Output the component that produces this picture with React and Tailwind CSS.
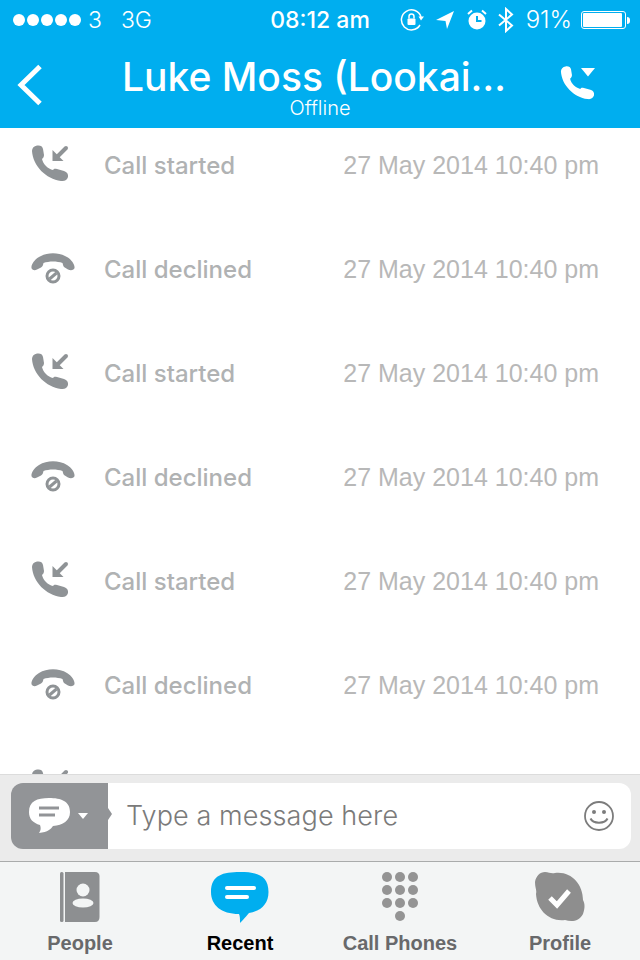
import React from "react";

const SANS = "font-['Liberation_Sans',Arial,sans-serif]";
const MEDIUM = "font-['Inter','Liberation_Sans',sans-serif] font-medium";
const LIGHT = "font-['Inter','Liberation_Sans',sans-serif] font-light";

const HANDSET = "M7 1.500C10 1 12.500 2 13 5L14 11C14 13 13 14 12 15C13 20 18 25 23 26C24 24.500 25 24.500 27 25L34 27C37 28 38.500 30 38 33C37 36 35 37.500 31 37C16 35 3 22 2 7C2 4 4 2 7 1.500Z";

const StartedIcon = () => (
    <svg width="40" height="40" viewBox="0 0 40 40" className="block">
        <path d={HANDSET} fill="#8f9396" />
        <path d="M36 4L25 15" stroke="#8f9396" strokeWidth="4" strokeLinecap="round" fill="none" />
        <path d="M22.500 6V17H33.500Z" fill="#8f9396" />
    </svg>
);

const DeclinedIcon = () => (
    <svg width="46" height="34" viewBox="0 0 46 34" className="block">
        <path d="M1.500 17C1 14 4 9 9 6C17 1 29 1 37 6C42 9 45 14 44.500 17C44 19 41 20 38 18.500L34 16C33 15 33 13 32.500 12C27 10 19 10 13.500 12C13 14 13 15 11 16.500L7 18.500C4.500 20 2 19 1.500 17Z" fill="#8f9396" />
        <circle cx="23" cy="25" r="6" fill="none" stroke="#8f9396" strokeWidth="3" />
        <path d="M19.500 28L26.500 22" stroke="#8f9396" strokeWidth="3" />
    </svg>
);

const CallRow = ({ type }) => (
    <div className="flex h-[104px] shrink-0 items-center pl-[30px] pr-[41px]">
        <div className="flex w-[74px] -translate-y-[2px]">
            {type === "started" ? <StartedIcon /> : <DeclinedIcon />}
        </div>
        <span className={`${MEDIUM} flex-1 text-[24px] text-[#b0b2b3]`}>
            {type === "started" ? "Call started" : "Call declined"}
        </span>
        <span className={`${SANS} text-[25px] text-[#b8b8b8]`}>27 May 2014 10:40 pm</span>
    </div>
);

const StatusBar = () => (
    <div className="flex h-10 items-center px-[10px] text-[23px] text-white">
        <div className="flex flex-1 items-center">
            <div className="ml-[3px] flex gap-[2px]">
                {[0, 1, 2, 3, 4].map((i) => (
                    <span key={i} className="h-3 w-3 rounded-full bg-white" />
                ))}
            </div>
            <span className={`${LIGHT} ml-[7px]`}>3</span>
            <span className={`${LIGHT} ml-[19px]`}>3G</span>
        </div>
        <span className={`${MEDIUM} text-[23px]`}>08:12 am</span>
        <div className="flex flex-1 items-center justify-end">
            <svg width="24" height="24" viewBox="0 0 24 24" fill="none" stroke="white" strokeWidth="1.500">
                <path d="M20 17A10 10 0 1 1 21 9" />
                <path d="M18.500 8.500L24 8.500L21 12.500Z" fill="white" stroke="none" />
                <rect x="7.500" y="10.500" width="8" height="6.500" rx="1" fill="white" stroke="none" />
                <path d="M9 10.500V8.500A2.500 2.500 0 0 1 14 8.500V10.500" />
            </svg>
            <svg className="ml-[12px]" width="20" height="20" viewBox="0 0 20 20" fill="white">
                <path d="M0 10L18 1L11 19L9.500 11Z" />
            </svg>
            <svg className="ml-[11px]" width="20" height="22" viewBox="0 0 20 22">
                <circle cx="10" cy="12" r="8.500" fill="white" />
                <path d="M10 7V12H14.500" stroke="#00aeef" strokeWidth="2" fill="none" />
                <path d="M1 5L5 1.500M19 5L15 1.500" stroke="white" strokeWidth="2" />
            </svg>
            <svg className="ml-[11px]" width="16" height="26" viewBox="0 0 16 26" fill="none" stroke="white" strokeWidth="2">
                <path d="M1 7.500L14 18.500L8 24V2L14 7.500L1 18.500" />
            </svg>
            <span className={`${LIGHT} ml-[12px] text-[24px]`}>91%</span>
            <div className="ml-[9px] flex items-center">
                <div className="h-[18px] w-[45px] rounded-[3px] border border-white p-[1px]">
                    <div className="h-full w-[39px] rounded-[1px] bg-white" />
                </div>
                <div className="ml-[1px] h-[7px] w-[3px] rounded-r-sm bg-white" />
            </div>
        </div>
    </div>
);

const Header = () => (
    <div className="bg-[#00aeef]">
        <StatusBar />
        <div className="relative flex h-[88px] items-start pl-[17px] pr-[44px] text-white">
            <svg className="mt-[24px]" width="26" height="42" viewBox="0 0 26 42" fill="none" stroke="white" strokeWidth="5">
                <path d="M23 2.500L4 21L23 39.500" />
            </svg>
            <div className="flex-1 whitespace-nowrap pl-[79px]">
                <div className={`${MEDIUM} mt-[15px] text-[39px] leading-[44px]`}>Luke Moss (Lookai…</div>
            </div>
            <svg className="mt-[25px]" width="36" height="36" viewBox="0 0 36 36">
                <path transform="scale(0.92) translate(-1 0)" d={HANDSET} fill="white" />
                <path d="M21 3H35L28 11.500Z" fill="white" />
            </svg>
            <div className={`${LIGHT} absolute bottom-[9px] left-0 w-full text-center text-[20px] leading-[22px]`}>Offline</div>
        </div>
    </div>
);

const InputBar = () => (
    <div className="h-[88px] shrink-0 border-y border-t-[#dcdcdc] border-b-[#a9abab] bg-[#ebebeb] pl-[11px] pr-[9px] pt-[8px]">
        <div className="flex h-[66px] w-full items-stretch">
            <div className="relative flex w-[97px] shrink-0 items-center rounded-l-[12px] bg-[#929497] pl-[18px]">
                <svg width="44" height="38" viewBox="0 0 44 38">
                    <path d="M20 1C32 1 41 4 41 15C41 24 34 28 24 29C22 32 19 35 10 36C12 33 12 31 11 28C4 26 0 22 0 15C0 4 8 1 20 1Z" fill="white" />
                    <path d="M10 11H30" stroke="#929497" strokeWidth="3" />
                    <path d="M10 18H26" stroke="#929497" strokeWidth="3" />
                </svg>
                <svg className="ml-[5px]" width="10" height="6" viewBox="0 0 10 6">
                    <path d="M0 0H10L5 6Z" fill="white" />
                </svg>
                <svg className="absolute -right-[4px] top-[25px]" width="4" height="12" viewBox="0 0 4 12">
                    <path d="M0 0L4 6L0 12Z" fill="#929497" />
                </svg>
            </div>
            <div className="flex flex-1 items-center justify-between rounded-r-[12px] bg-white pl-[18px] pr-[16px]">
                <span className={`${LIGHT} text-[27px] tracking-[0.1px] text-[#7a7a7a]`}>Type a message here</span>
                <svg width="32" height="32" viewBox="0 0 32 32" fill="none" stroke="#7c7c7c" strokeWidth="1.800">
                    <circle cx="16" cy="16" r="14" />
                    <circle cx="11" cy="12" r="2" fill="#7c7c7c" stroke="none" />
                    <circle cx="21" cy="12" r="2" fill="#7c7c7c" stroke="none" />
                    <path d="M7.500 18.500C10 24 22 24 24.500 18.500" strokeWidth="2" />
                </svg>
            </div>
        </div>
    </div>
);

const PeopleIcon = () => (
    <svg width="40" height="50" viewBox="0 0 40 50">
        <rect x="0" y="0" width="3.500" height="50" rx="1.500" fill="#8d8f91" />
        <path d="M5 0H35C38 0 39.500 2 39.500 4V45C39.500 48 38 50 35 50H5Z" fill="#8d8f91" />
        <circle cx="23" cy="18" r="6.500" fill="#f3f5f5" />
        <ellipse cx="23" cy="31" rx="10.500" ry="4.500" fill="#f3f5f5" />
    </svg>
);

const RecentIcon = () => (
    <svg width="58" height="52" viewBox="0 0 58 52">
        <path d="M29 0C46 0 57.500 3 57.500 20C57.500 32 50 39 38 41C34 46 30 50 29 51C29 47 29 44 28 42C10 42 0 33 0 20C0 3 12 0 29 0Z" fill="#00aeef" />
        <path d="M16 16H43" stroke="white" strokeWidth="4" strokeLinecap="round" />
        <path d="M16 25H36" stroke="white" strokeWidth="4" strokeLinecap="round" />
    </svg>
);

const DialIcon = () => (
    <svg width="38" height="50" viewBox="0 0 38 50" fill="#949494">
        {[5, 18, 31].flatMap((y) =>
            [5, 18, 31].map((x) => <circle key={`${x}-${y}`} cx={x + 1} cy={y} r="5" />)
        )}
        <circle cx="19" cy="44" r="5" />
    </svg>
);

const ProfileIcon = () => (
    <svg width="50" height="50" viewBox="0 0 50 50">
        <path d="M10 0C14 0 16 2 20 1C36 -1 48 12 48 28C50 32 50 36 48 42C44 50 36 50 30 48C14 50 2 38 1 22C2 18 0 16 0 10C1 4 5 0 10 0Z" fill="#8e8e8e" />
        <path d="M15 26L22 33L34 19" stroke="white" strokeWidth="5" fill="none" />
    </svg>
);

const TabItem = ({ icon, label, active }) => (
    <div className="flex flex-1 flex-col items-center">
        <div className="flex h-[59px] items-start">{icon}</div>
        <span className={`${SANS} text-[20px] font-bold leading-[24px] ${active ? "text-black" : "text-[#68696b]"}`}>{label}</span>
    </div>
);

const TabBar = () => (
    <div className="flex flex-1 bg-[#f3f5f5] pt-[10px]">
        <TabItem icon={<PeopleIcon />} label="People" />
        <TabItem icon={<RecentIcon />} label="Recent" active />
        <TabItem icon={<DialIcon />} label="Call Phones" />
        <TabItem icon={<ProfileIcon />} label="Profile" />
    </div>
);

const rows = ["started", "declined", "started", "declined", "started", "declined", "started"];

export default function App() {
    return (
        <div className="flex h-[960px] w-[640px] flex-col overflow-hidden bg-white">
            <Header />
            <div className="h-[646px] shrink-0 overflow-hidden">
                <div className="-mt-[14px]">
                    {rows.map((type, index) => (
                        <CallRow type={type} key={index} />
                    ))}
                </div>
            </div>
            <InputBar />
            <TabBar />
        </div>
    );
}
